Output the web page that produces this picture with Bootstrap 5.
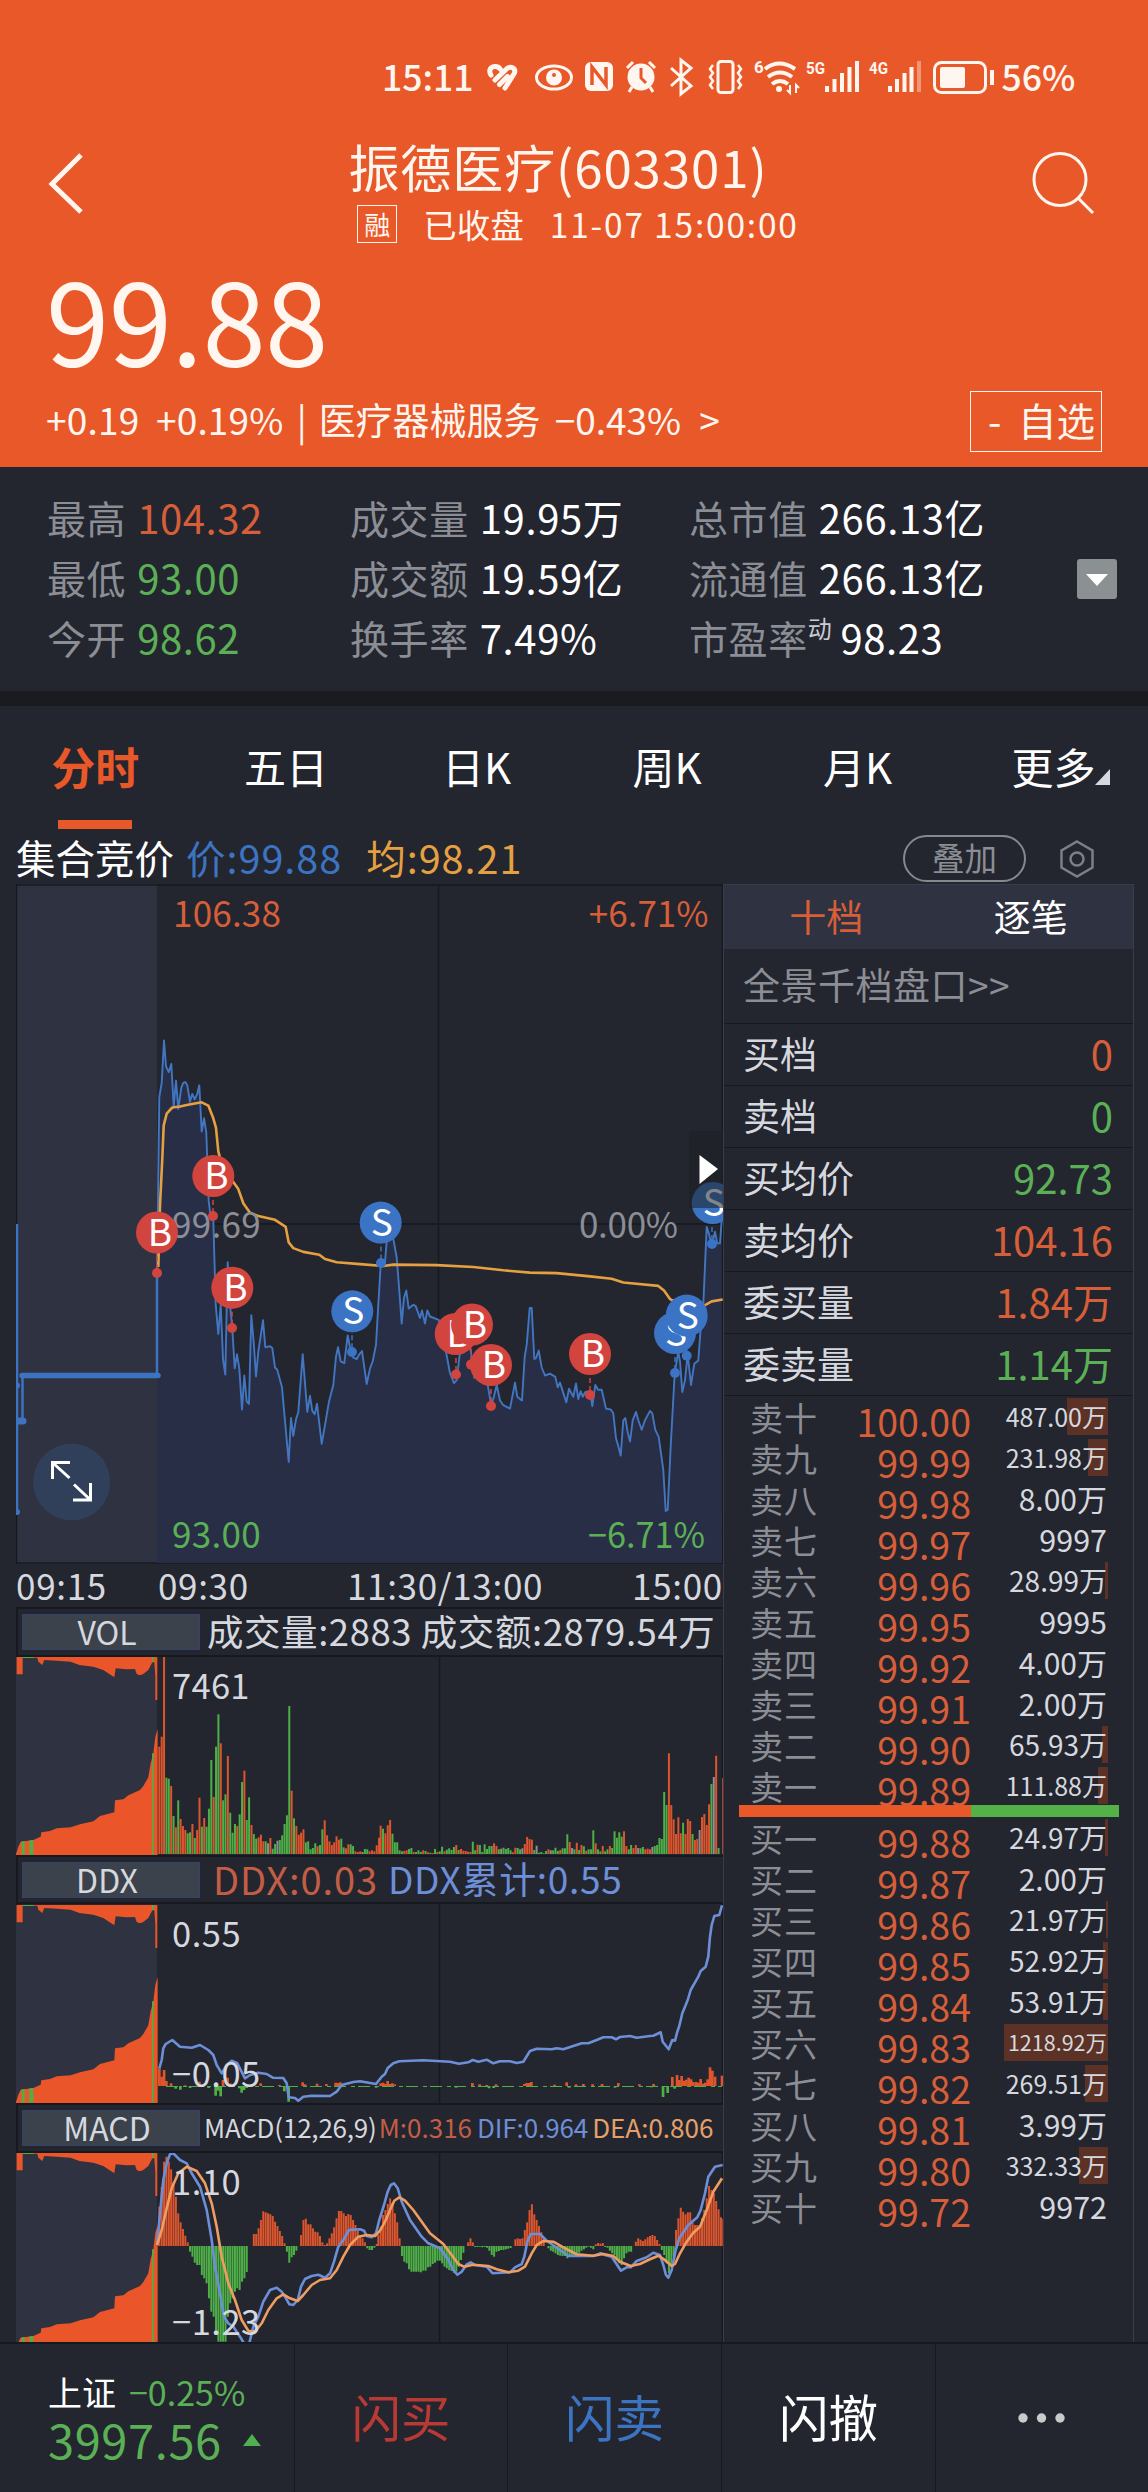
<!DOCTYPE html>
<html lang="zh-CN">
<head>
<meta charset="utf-8">
<meta name="viewport" content="width=device-width, initial-scale=1">
<title>振德医疗(603301)</title>
<link href="https://cdn.jsdelivr.net/npm/bootstrap@5.3.0/dist/css/bootstrap.min.css" rel="stylesheet">
<style>
:root{--up:#e95829;--ink:#23252f;--up2:#d65e38;--down:#5bb056;--blue:#3d74c2;--line:#171921;--pale:#d5d8de;--dim:#8b8e94}
html,body{overflow-x:hidden}
body{background:var(--ink);color:#fff;font-family:"Noto Sans CJK SC","Noto Sans",sans-serif;line-height:1;width:1148px;font-size:39px}
svg{display:block;flex:none}
.up{color:var(--up2)}.down{color:var(--down)}.blue{color:var(--blue)}.dim{color:var(--dim)}
.hero{background:var(--up);height:467px;color:#fff6f0}
.status{box-sizing:content-box;height:62px;padding:45px 0 0 382px;font-size:35.5px;font-weight:500}
.titlebar{height:114px;padding:0 52px 0 48px;margin-top:26px}
.ttl{font-size:51px;height:59px;letter-spacing:.9px}
.sub{font-size:33.5px;height:40px;gap:26px;margin-left:40px;padding-bottom:1px}
.date{letter-spacing:1.8px}
.rong{font-size:26px;border:1.5px solid #fff6f0;width:40px;height:38px}
.price{font-size:114px;height:142px;padding-left:46px;letter-spacing:-.6px}
.chg{height:61px;padding:0 46px;font-size:37px;white-space:nowrap}
.fav{width:132px;height:61px;border:1.5px solid #fff6f0;font-size:38.5px;padding:0 6px 3px 0;word-spacing:8px;margin-top:3px}
.stats{height:224px;padding:20px 31px 0 47px;font-size:40px;letter-spacing:.6px}
.stats .g>div{height:60px;white-space:nowrap}
.stats .dim{font-size:39px;margin-right:11px}
.g1{width:303px}.g2{width:339px}
.dyn{font-size:24px;color:#c9ccd2;margin:9px 8px 0 0}
.strip{height:15px;background:#1a1b1f}
.tabs{height:129px;font-size:42px}
.tabs .nav-link{flex:0 0 190.6px;height:123px;padding:0 0 3px;color:#fff;position:relative}
.tabs .nav-link:last-child{flex:1 0 0;padding-left:21px}
.tabs .active{color:var(--up);font-weight:700;font-size:44px}
.tabs .active::after{content:"";position:absolute;left:58px;bottom:0;width:74px;height:9px;background:var(--up)}
.info{height:49px;padding:0 54px 2px 16px;font-size:39.5px}
.info>span:not(.pill){padding-bottom:4px}
.vals{letter-spacing:1px}
.pill{width:123px;height:47px;border:2px solid #85898f;border-radius:24px;font-size:32.5px;margin-right:34px;padding-bottom:3px}
.left{width:707px;margin-left:16px}
.times{height:43px;font-size:35px;color:var(--pale);letter-spacing:.7px;padding-bottom:3px}
.ind{height:50px;border:2px solid var(--line);border-width:2px 0 2px 2px;color:var(--pale);white-space:nowrap}
.ind>span{padding-bottom:2px}
.btn-ind{width:178px;height:36px;background:#3c424c;border:1.5px solid #35436a;border-radius:0;color:var(--pale);font-size:32px;line-height:1;padding:0 8px 3px 0;margin-left:4px;flex:none}
.right{width:411px;border:1px solid #3a3d48;border-width:1px 1px 0 1px;height:1458px}
.seg{height:64px;background:#2f3240;font-size:37px;padding-bottom:2px}
.qlink{height:75px;padding:0 0 3px 19px;font-size:37px;border-bottom:1.5px solid var(--line);letter-spacing:.5px}
.kv{height:62px;padding:0 20px 3px 19px;border-bottom:1.5px solid var(--line);font-size:40px}
.kv span:first-child{font-size:37px;color:var(--pale)}
.ord{height:41px;padding:0 25px 4px 26px}
.lab{font-size:33px;width:68px;color:var(--dim);letter-spacing:1px;padding-top:3px}
.prc{font-size:37.5px;width:153px;text-align:right;color:var(--up2);padding-top:4px}
.qty{height:37px;position:relative;color:var(--pale)}
.qty i{position:absolute;right:0;top:0;bottom:0;background:#5c3226}
.qty b{font-weight:400;position:relative;margin-right:1px;padding-bottom:1px}
.buysell{height:12px;margin:0 14px 0 15px;position:relative;background:#54b147}
.buysell div{height:12px;background:#e95829}
.foot{height:150px;border-top:2px solid var(--line);font-size:49.5px}
.foot>div{border-right:1.5px solid var(--line)}
.act{padding-bottom:5px}
</style>
<script src="https://cdn.jsdelivr.net/npm/bootstrap@5.3.0/dist/js/bootstrap.bundle.min.js"></script>
</head>
<body>
<header class="hero d-flex flex-column">
  <div class="status d-flex align-items-center">
    <span>15:11</span>
    <svg width="522" height="45" viewBox="478 55 522 45" style="margin-left:6px" fill="none" stroke="#fff6f0" stroke-width="3">
      <path d="M489 76c-3-5 0-8.500 4-8.500 3 0 4.500 1 5.500 3M493 81l12-11.500c4-3 9 0 7.500 4.500L503 89M497.500 85.500l8-8" stroke-width="5" stroke-linecap="round" stroke-linejoin="round"/>
      <ellipse cx="552" cy="78.500" rx="17.500" ry="11.500"/><circle cx="552" cy="78.500" r="6.500" fill="#fff6f0"/><circle cx="552" cy="76" r="2" fill="#e95829" stroke="none"/>
      <rect x="583" y="63" width="28" height="29" rx="6" fill="#fff6f0" stroke="none"/><path d="M590 86V68l14 18V68" stroke="#e95829" stroke-width="3.500"/>
      <circle cx="639" cy="78" r="13.500" fill="#fff6f0" stroke="none"/><path d="M639 69v10l5 5" stroke="#e95829"/><path d="M625 69l6-6M653 69l-6-6M630 88l-3 5M648 88l3 5"/>
      <path d="M669 69l20 18-10 8V61l10 8-20 18"/>
      <rect x="716" y="62.500" width="15" height="31" rx="3"/><path d="M711 66l-3 4 3 4-3 4 3 4-3 4 3 4M736 66l3 4-3 4 3 4-3 4 3 4-3 4" stroke-width="2.500"/>
      <g fill="#fff6f0" stroke="none" font-family="Roboto,sans-serif" font-size="17" font-weight="700"><text x="752" y="74">6</text><text x="804" y="75" textLength="19" lengthAdjust="spacingAndGlyphs">5G</text><text x="867" y="75" textLength="19" lengthAdjust="spacingAndGlyphs">4G</text></g>
      <path d="M763 70q14-11 30 0M766 78q12-9 24 0M770 85q8-6 16 0" stroke-width="4"/><circle cx="777" cy="90" r="3" fill="#fff6f0" stroke="none"/><path d="M788 86v8l-3-3M794 94v-8l3 3" stroke-width="2"/>
      <path d="M825 93v-6M832.500 93V80M840 93V74M847.500 93V68M855 93V62M888 93v-6M895 93V80M902.500 93V74M909.500 93V68" stroke-width="4"/><path d="M917 93V62" stroke-width="4" opacity=".4"/>
      <rect x="932.500" y="63.500" width="51" height="30" rx="7"/><rect x="938" y="68" width="25" height="21" rx="2" fill="#fff6f0" stroke="none"/><path d="M990 71v15" stroke-width="4"/>
    </svg>
    <span>56%</span>
  </div>
  <div class="titlebar d-flex justify-content-between">
    <svg width="36" height="114" viewBox="48 133 36 114" fill="none" stroke="#fff6f0" stroke-width="5"><path d="M81 155L52 184l29 28"/></svg>
    <div class="d-flex flex-column align-items-center">
      <div class="ttl d-flex align-items-center mt-1">振德医疗(603301)</div>
      <div class="sub d-flex align-items-center mt-2"><span class="rong d-flex align-items-center justify-content-center">融</span><span>已收盘</span><span class="date">11-07 15:00:00</span></div>
    </div>
    <svg width="64" height="114" viewBox="1032 133 64 114" fill="none" stroke="#fff6f0" stroke-width="3"><circle cx="1060" cy="179.500" r="26"/><path d="M1078 198l15 15"/></svg>
  </div>
  <div class="price d-flex align-items-center">99.88</div>
  <div class="chg d-flex align-items-center">
    <span style="word-spacing:8px;letter-spacing:.2px">+0.19 +0.19%</span><span style="margin:0 12px 0 13px">|</span><span>医疗器械服务</span><span style="margin-left:14px">−0.43%</span><span style="margin-left:18px">&gt;</span>
    <span class="fav ms-auto d-flex align-items-center justify-content-end">- 自选</span>
  </div>
</header>
<section class="stats d-flex">
  <div class="g g1">
    <div class="d-flex align-items-center"><span class="dim">最高</span><span class="up">104.32</span></div>
    <div class="d-flex align-items-center"><span class="dim">最低</span><span class="down">93.00</span></div>
    <div class="d-flex align-items-center"><span class="dim">今开</span><span class="down">98.62</span></div>
  </div>
  <div class="g g2">
    <div class="d-flex align-items-center"><span class="dim">成交量</span><span>19.95万</span></div>
    <div class="d-flex align-items-center"><span class="dim">成交额</span><span>19.59亿</span></div>
    <div class="d-flex align-items-center"><span class="dim">换手率</span><span>7.49%</span></div>
  </div>
  <div class="g">
    <div class="d-flex align-items-center"><span class="dim">总市值</span><span>266.13亿</span></div>
    <div class="d-flex align-items-center"><span class="dim">流通值</span><span>266.13亿</span></div>
    <div class="d-flex align-items-center"><span class="dim me-0">市盈率</span><span class="dyn align-self-start">动</span><span>98.23</span></div>
  </div>
  <svg class="ms-auto" style="margin-top:72px" width="40" height="40" viewBox="0 0 40 40"><rect width="40" height="40" rx="3" fill="#8b9093"/><path d="M9 15h22L20 27z" fill="#fff"/></svg>
</section>
<div class="strip"></div>
<nav class="tabs nav flex-nowrap">
  <a class="nav-link active d-flex align-items-center justify-content-center">分时</a>
  <a class="nav-link d-flex align-items-center justify-content-center">五日</a>
  <a class="nav-link d-flex align-items-center justify-content-center">日K</a>
  <a class="nav-link d-flex align-items-center justify-content-center">周K</a>
  <a class="nav-link d-flex align-items-center justify-content-center">月K</a>
  <a class="nav-link d-flex align-items-center justify-content-center">更多<svg width="15" height="38" viewBox="0 0 15 38"><path d="M15 22v16H0z" fill="#d5d8de"/></svg></a>
</nav>
<div class="info d-flex align-items-center">
  <span>集合竞价</span><span class="blue vals" style="margin-left:12px">价:99.88</span><span class="vals" style="margin-left:24px;color:#e5a141">均:98.21</span>
  <span class="pill ms-auto d-flex align-items-center justify-content-center dim">叠加</span>
  <svg width="34" height="38" viewBox="0 0 34 38" fill="none" stroke="#7b7f86" stroke-width="2.500"><path d="M17 1.500l15.500 9v17L17 36.500 1.500 27.500v-17z"/><circle cx="17" cy="19" r="6.500"/></svg>
</div>
<main class="d-flex">
  <div class="left">
    <svg id="main" width="707" height="680" viewBox="16 884 707 680">
      <rect x="16" y="884" width="141" height="680" fill="#2f3240"/>
      <path d="M16 885H723M16.500 884V1564M16 1563H723M438.500 885V1563M157 1224H723M722.500 884V1564" stroke="#171921" stroke-width="1.500" fill="none"/>
      <g id="price"></g>
      <g fill="none" stroke="#3d74c2"><path d="M17 1224V1512M22.500 1421V1376M157 1375V1273" stroke-width="2.500"/><path d="M22 1375.500H158" stroke-width="5.500" stroke-linecap="round"/><path d="M18 1421h5" stroke-width="7" stroke-linecap="round"/></g>
      <circle cx="17" cy="1385.500" r="3" fill="#3d74c2"/><circle cx="17" cy="1512" r="3" fill="#3d74c2"/>
      <g font-size="35">
        <text x="173" y="927" fill="#d65e38" letter-spacing=".2">106.38</text><text x="708.500" y="927" text-anchor="end" fill="#d65e38">+6.71%</text>
        <text x="172" y="1238" fill="#8b8e94" letter-spacing=".3">99.69</text><text x="579" y="1238" textLength="99" fill="#8b8e94">0.00%</text>
        <text x="172" y="1548" fill="#5bb056" letter-spacing=".3">93.00</text><text x="588" y="1548" textLength="117" lengthAdjust="spacingAndGlyphs" fill="#5bb056">−6.71%</text>
      </g>
      <g id="marks"></g>
      <rect x="689" y="1131" width="34" height="77" fill="#1f2126" opacity=".55"/><path d="M699.500 1155L718 1169l-18.500 15z" fill="#fff"/>
      <circle cx="71.700" cy="1482" r="38.500" fill="#30405a"/>
      <path d="M70 1462.500H52.500V1479M53 1463l16.500 15M73 1500H90.500V1483M90 1499.500L74 1484.500" stroke="#fff" stroke-width="3" fill="none"/>
    </svg>
    <div class="times d-flex align-items-center"><span>09:15</span><span style="margin-left:51px">09:30</span><span style="margin-left:98px">11:30/13:00</span><span class="ms-auto">15:00</span></div>
    <div class="ind d-flex align-items-center"><button class="btn btn-ind">VOL</button><span style="font-size:36.500px;margin-left:7px;letter-spacing:.55px">成交量:2883 成交额:2879.54万</span></div>
    <svg id="vol" width="707" height="198" viewBox="16 1657 707 198"></svg>
    <div class="ind d-flex align-items-center" style="height:49px"><button class="btn btn-ind">DDX</button><span style="font-size:38px;margin-left:13px;letter-spacing:.9px;color:#c25e46">DDX:0.03</span><span style="font-size:37px;margin-left:10px;letter-spacing:.7px;color:#6d8fd8">DDX累计:0.55</span></div>
    <svg id="ddx" width="707" height="199" viewBox="16 1904 707 199"></svg>
    <div class="ind d-flex align-items-center" style="font-size:26px"><button class="btn btn-ind">MACD</button><span style="margin-left:4px;letter-spacing:-.2px">MACD(12,26,9)</span><span style="margin-left:2px;color:#c25e46">M:0.316</span><span style="margin-left:5px;letter-spacing:-.1px;color:#6d8fd8">DIF:0.964</span><span style="margin-left:4px;color:#e5a06a">DEA:0.806</span></div>
    <svg id="macd" width="707" height="189" viewBox="16 2153 707 189"></svg>
  </div>
  <aside class="right">
    <div class="seg d-flex align-items-center text-center"><span class="w-50 up">十档</span><span class="w-50">逐笔</span></div>
    <div class="qlink d-flex align-items-center dim">全景千档盘口&gt;&gt;</div>
    <div class="kv d-flex align-items-center justify-content-between"><span>买档</span><span class="up">0</span></div>
    <div class="kv d-flex align-items-center justify-content-between"><span>卖档</span><span class="down">0</span></div>
    <div class="kv d-flex align-items-center justify-content-between"><span>买均价</span><span class="down">92.73</span></div>
    <div class="kv d-flex align-items-center justify-content-between"><span>卖均价</span><span class="up">104.16</span></div>
    <div class="kv d-flex align-items-center justify-content-between"><span>委买量</span><span class="up">1.84万</span></div>
    <div class="kv d-flex align-items-center justify-content-between"><span>委卖量</span><span class="down">1.14万</span></div>
    <div id="asks" style="height:409px;padding-top:2px"></div>
    <div class="buysell"><div style="width:61.1%"></div></div>
    <div id="bids" style="padding-top:2px"></div>
  </aside>
</main>
<footer class="foot d-flex">
  <div style="width:295px;padding:29px 0 0 48px;white-space:nowrap">
    <div class="d-flex align-items-center" style="height:38px;font-size:34px"><span>上证</span><span class="down" style="margin-left:13px">−0.25%</span></div>
    <div class="d-flex align-items-center down" style="height:54px;font-size:47px;letter-spacing:.6px">3997.56<svg width="18" height="12" viewBox="0 0 18 12" style="margin:3px 0 0 21px"><path d="M9 0l9 12H0z" fill="#4fb04f"/></svg></div>
  </div>
  <div class="act d-flex align-items-center justify-content-center" style="width:213px;color:#b83a34">闪买</div>
  <div class="act d-flex align-items-center justify-content-center blue" style="width:214px">闪卖</div>
  <div class="act d-flex align-items-center justify-content-center" style="width:214px">闪撤</div>
  <div class="d-flex align-items-center justify-content-center flex-fill border-0"><svg width="48" height="10" viewBox="0 0 48 10" fill="#c9cacc"><circle cx="5" cy="5" r="4.700"/><circle cx="23.500" cy="5" r="4.700"/><circle cx="42" cy="5" r="4.700"/></svg></div>
</footer>
<script>
const $=id=>document.getElementById(id), add=(id,s)=>$(id).insertAdjacentHTML('beforeend',s);
// order book: level, price, quantity, text size, depth bar width
const book=(id,side,rows)=>add(id,rows.map(([l,p,q,s,w])=>`<div class="ord d-flex"><span class="lab">${side+l}</span><span class="prc">${p}</span><span class="qty flex-fill d-flex align-items-center justify-content-end" style="font-size:${s}px"><i style="width:${w}px"></i><b>${q}</b></span></div>`).join(''));
book('asks','卖',[['十','100.00','487.00万',25,41],['九','99.99','231.98万',25,20],['八','99.98','8.00万',30,0],['七','99.97','9997',30.5,0],['六','99.96','28.99万',28,3],['五','99.95','9995',30.5,0],['四','99.92','4.00万',30,0],['三','99.91','2.00万',30,0],['二','99.90','65.93万',28,6],['一','99.89','111.88万',25,10]]);
book('bids','买',[['一','99.88','24.97万',28,3],['二','99.87','2.00万',30,0],['三','99.86','21.97万',28,2],['四','99.85','52.92万',28,5],['五','99.84','53.91万',28,5],['六','99.83','1218.92万',21.5,104],['七','99.82','269.51万',25,23],['八','99.81','3.99万',30,0],['九','99.80','332.33万',25,29],['十','99.72','9972',30.5,0]]);

// series are sampled in thirds of a pixel horizontally; the afternoon half starts 1080 units in
const pts=(a,b,oy,ky)=>{const f=(s,dx)=>s.trim().split(/\s+/).map(p=>{const[x,y]=p.split(',').map(Number);return ((x+dx)/3).toFixed(1)+','+(oy+y/ky).toFixed(1)});return f(a,0).concat(f(b,1080)).join(' ')};
const line=(p,c,w)=>`<polyline points="${p}" fill="none" stroke="${c}" stroke-width="${w}" stroke-linejoin="round"/>`;
const pr=pts(`471,845 478,460 485,430 492,340 498,395 506,407 514,390 521,480 528,425 535,485 544,440 550,430 556,428 562,435 570,470 577,453 584,465 591,455 598,435 605,533 612,505 619,535 626,680 633,720 640,720 647,900 655,962 662,900 669,1015 676,1048 683,810 690,900 697,950 704,1035 711,1005 718,1035 726,1122 733,1050 740,1105 747,1110 754,922 761,980 768,1052 775,1000 789,933 796,990 810,988 817,992 825,1033 832,1038 846,1075 853,1130 866,1233 873,1140 880,1178 888,1143 895,1128 908,1005 922,1127 930,1093 937,1125 944,1132 951,1110 965,1195 975,1155 987,1105 1000,1070 1008,1010 1014,990 1022,1020 1033,1024 1043,965 1050,990 1060,1012 1070,1015 1078,1005 1086,998 1100,1068 1110,1035 1118,1020 1128,985`,
`55,900 62,815 75,810 80,765 90,700 100,760 110,800 118,870 125,940 132,885 139,870 146,908 160,900 167,903 180,928 186,912 195,940 202,912 210,925 236,932 258,1000 270,1045 282,1066 290,1060 300,1000 315,960 333,1000 343,1055 355,1040 370,1020 383,1070 393,1110 400,1100 410,1070 420,1103 430,1113 450,1120 465,1065 472,1095 486,1103 494,1010 500,985 509,907 515,907 523,1015 528,1013 536,997 545,1033 555,1050 570,1046 586,1053 593,1075 600,1065 619,1107 627,1078 640,1095 648,1067 655,1100 662,1083 668,1095 676,1085 690,1083 697,1115 706,1070 714,1080 725,1080 738,1120 752,1122 760,1130 768,1183 775,1200 782,1220 790,1145 796,1140 803,1170 810,1190 818,1145 828,1127 835,1145 845,1165 855,1145 870,1125 877,1130 886,1165 896,1180 910,1250 917,1337 923,1335 932,1200 944,1045 955,1000 960,1020 967,1085 975,1060 983,1005 993,1070 1003,1025 1015,1018 1022,950 1030,900 1040,735 1047,750 1055,775 1065,745 1072,770 1080,770 1085,720`,880,2.119);
const avg=pts(`475,820 480,690 487,590 491,520 500,495 517,482 540,480 560,477 605,471 625,478 640,505 648,525 655,575 668,610 700,640 715,655 730,685 750,705 775,712 825,720 857,735 866,768 880,780 910,788 958,794 975,803 1010,810`,`0,814 70,818 100,815 230,816 340,820 430,827 510,832 590,833 690,840 755,845 790,853 895,860 912,870 930,888 980,905 1030,903 1055,893 1088,889`,880,2.119);
add('price',`<polygon points="157,1563 ${pr} 722,1563" fill="#29304a" fill-opacity=".85"/>`+line(pr,'#4276c0',1.9)+line(avg,'#e5a141',2.6));
add('marks',[['B',157,1232.5,157,1273],['B',213.3,1176,213,1216],['B',232.3,1287.7,232,1328],['S',352.3,1311.3,352,1352],['S',380.7,1222.6,381,1263],['B',455.7,1334,456,1374.5],['B',472,1324.5,471,1364.6],['B',491,1365,491,1406],['B',590,1354,590,1395],['S',675,1333,675,1373],['S',686.7,1315.6,686.7,1355.7],['S',712.7,1203,712,1244]].map(([t,x,y,dx,dy])=>{const c=t=='B'?'#d2453f':'#3b74c4';return `<path d="M${dx} ${y}V${dy}" stroke="${c}" stroke-width="1.5" stroke-dasharray="5 3"/><circle cx="${dx}" cy="${dy}" r="5" fill="${c}"/><circle cx="${x}" cy="${y}" r="21" fill="${c}"/><text x="${x+(t=='B'?3:1)}" y="${y+13}" font-size="37" text-anchor="middle" fill="#fff">${t}</text>`}).join(''));

// call-auction silhouette shared by the three indicator panels
const R='#ea562a',G='#4faf47',X='#8b8f96',C={r:'#dd552d',g:G,x:X};
const auction=dy=>`<rect x="16" y="1657" width="141" height="198" fill="#2f3240" transform="translate(0 ${dy})"/><g transform="translate(0 ${1600+dy}) scale(.33333)"><path fill="${R}" d="M48 762L55 740 62 725 100 720 122 710 124 697 150 693 170 685 212 682 240 673 280 664 300 648 343 637 345 601 370 598 385 586 420 570 430 558 445 532 452 490 460 460 466 410 473 387V765H48zM50 171V223H68V173H112L115 185 127 195 133 180 170 182 212 185 238 195 280 200 310 210 320 217 343 232 347 205 380 208 405 207 410 222 420 226 430 222 445 210 457 187 463 187 466 230V300H472V171z"/><path fill="${G}" d="M65 724h9v40h-9zM88 721h12v43h-12zM456 460h5v304h-5zM456 171h5v16h-5zM68 171h32v3h-32z"/></g>`;
const grid=(y,h)=>`<path d="M439.500 ${y}v${h}M16.500 ${y}v${h}M722.500 ${y}v${h}" stroke="#171921" stroke-width="1.500"/>`;
const bars=(s,x0,base,oy)=>s.trim().split(/\s+/).map((t,i)=>{const m=t.match(/^(\d+)([rgx])$/);if(!m)return'';const y=oy+Math.min(+m[1],base)/3,h=Math.abs(base-m[1])/3;return `<rect x="${((x0+i*7.088-3)/3).toFixed(2)}" y="${y.toFixed(1)}" width="2" height="${h.toFixed(1)}" fill="${C[m[2]]}"/>`}).join('');
add('vol',grid(1657,198)+auction(0)+bars(`440r 410r 171r 533g 536g 558r 648g 682r 601g 657r 678r 690r 700g 697g 672r 714g 690r 593r 680g 654r 680g 626g 480g 591r 440g 343g 430r 601g 583g 468r 638g 698g 672g 678r 643g 546g 512r 660g 592g 675r 702g 716g 712r 704r 724r 724g 730x 714r 746g 732g 722x 720g 706g 672g 646g 318g 572r 655g 678r 704r 698r 688r 727g 724g 748g 744g 730g 739r 735g 688g 661r 706r 724r 735r 727r 709r 719r 716g 742g 745r 733r 733g 738g 754r 756r 754r 756x 747g 748g 754r 751r 754r 736r 713r`,478,762,1600)+bars(`677r 686g 700r 676r 660r 701g 727g 727g 751g 754g 753r 751r 747g 744g 756r 756g 751g 756g 751r 753g 757r 758g 759r 747g 756r 754g 740g 754r 749g 745g 750g 741g 735r 750g 747r 752r 753r 755r 756r 725g 751g 734r 735g 756g 733g 747g 738g 738g 730r 738r 748g 746x 743g 747g 744g 751g 757r 743r 744g 748g 745x 732r 711r 717r 719r 750g 737x 758g 756g 760g 753g 748r 751x 751g 743g 753g 750r 745g 745g 703g 726r 744x 748g 728r 750g 735r 739g 752r 748g 748g 691g 730r 748g 754g 738r 754g 748g 738r 744g 694g 713g 697g 710g 694r 738r 748g 735g 744r 735r 744x 745g 741g 748r 746r 748r 741x 738g 735g 714g 717g 576g 615g 460r 615r 658r 702r 652r 700r 668g 702r 657r 663r 702g 720r 717r 690x 651r 642r 675r 613r 552g 531x 467r 744g - 534r`,1142,762,1600)+`<text x="172" y="1699" font-size="34.500" letter-spacing=".3" fill="#d5d8de">7461</text>`);

const spot=(s,dx,base,oy)=>s.trim().split(/\s+/).map(t=>{const[x,v]=t.split(',').map(Number);const y=oy+Math.min(v,base)/3;return `<rect x="${((x+dx-4)/3).toFixed(1)}" y="${y.toFixed(1)}" width="2.700" height="${(Math.abs(base-v)/3).toFixed(1)}" fill="${v<base?C.r:C.g}"/>`}).join('');
const ddx=pts(`478,265 485,240 490,205 497,192 517,180 540,200 575,203 600,195 625,210 640,225 650,255 665,280 680,255 695,242 712,250 735,295 750,285 775,278 800,282 818,293 850,294 860,310 866,352 885,354 895,362 910,350 935,347 990,348 1010,335 1025,315 1060,306`,`0,304 48,312 65,290 75,282 83,264 100,250 118,244 190,241 270,245 297,251 325,247 338,240 355,245 380,239 400,250 420,244 450,244 470,249 490,245 510,213 530,206 575,208 590,205 610,208 640,198 665,190 685,190 710,180 730,172 755,172 768,178 780,171 810,168 830,173 870,168 880,167 902,157 908,185 926,208 937,180 945,182 952,155 958,138 967,100 975,80 983,60 992,30 1015,-10 1022,-27 1037,-40 1045,-70 1050,-130 1055,-165 1063,-192 1078,-195 1086,-224`,1980,3);
add('ddx',grid(1904,199)+auction(248)+`<path d="M166 2086.500H722" stroke="${G}" stroke-width="1" stroke-dasharray="12 5 4 3"/>`+
spot('478,265 485,290 492,270 499,303 513,310 555,316 598,305 669,300 683,293 690,310 782,310 838,315 908,307 915,313 951,311 979,312 1007,308 1014,309 1021,307 527,326 541,329 570,324 626,324 647,347 655,332 662,349 718,325 725,338 732,330 740,324 853,334 866,365',0,318,1980)+
spot('62,310 69,308 76,312 83,303 90,312 97,310 104,313 337,309 359,313 380,315 408,313 493,312 500,309 507,309 514,306 584,314 620,307 648,313 670,312 698,313 726,312 775,309 838,313 881,312 937,291 951,285 958,300 965,288 972,302 979,299 986,293 993,298 1000,306 1008,306 1015,308 1022,297 1029,311 1036,308 1043,298 1050,262 1057,272 1065,290 1086,287 48,323 288,323 387,325 401,324 627,323 765,323 874,322 909,351 923,339 944,326',1080,318,1980)+
line(ddx,'#6d8fd8',2.6)+`<g font-size="34.500" letter-spacing=".5" fill="#d5d8de"><text x="172" y="1947">0.55</text><text x="172" y="2087">−0.05</text></g>`);

const run=(s,x0)=>bars(s.trim().split(/\s+/).map(v=>v=='-'?'-':v+(+v<798?'r':'g')).join(' '),x0,798,1980);
const dif=pts(`471,795 480,700 490,600 500,550 510,523 520,520 540,540 560,550 575,580 600,620 620,690 635,780 645,860 660,940 672,1010 685,1030 700,1040 720,1070 735,1095 748,1090 760,1040 775,1010 790,965 810,930 830,923 845,935 855,950 868,973 880,975 893,960 903,920 915,897 935,888 955,884 975,893 990,880 1002,845 1015,800 1030,780 1047,750`,`0,748 12,752 20,768 35,772 48,760 58,720 72,675 83,635 92,615 102,610 113,625 125,665 150,720 185,770 205,790 240,805 265,840 280,870 292,884 305,875 320,853 332,847 345,855 380,860 398,880 450,877 465,862 485,852 493,830 502,785 512,762 540,762 560,782 600,810 625,828 700,828 722,820 735,825 755,830 770,853 783,872 800,862 812,862 830,843 860,832 880,818 900,825 910,855 918,885 925,893 935,870 947,810 958,775 985,735 1012,712 1022,690 1035,640 1045,590 1065,560 1088,555`,1980,3);
const dea=pts(`471,795 485,750 500,685 515,625 535,580 560,560 590,573 615,610 635,670 650,740 665,830 685,910 705,960 725,1020 745,1052 765,1055 785,1030 805,990 830,955 850,943 870,955 893,963 910,945 935,915 960,900 990,895 1010,870 1030,830 1050,795`,`-5,770 20,765 45,768 60,752 75,725 90,690 103,662 118,652 135,662 160,690 210,760 250,792 275,825 295,852 312,860 340,854 385,858 410,868 445,877 475,872 495,860 515,820 530,795 550,783 580,785 610,802 650,823 700,827 730,822 760,828 780,845 812,858 840,852 870,838 895,827 912,838 935,858 945,852 960,820 980,785 1000,758 1020,740 1040,690 1060,635 1086,595`,1980,3);
add('macd',grid(2153,189)+auction(496)+run(`680 620 545 530 545 568 605 650 700 727 747 767 787 815 830 848 855 855 885 895 910 955 995 1010 1050 1085 1085 1085 1085 1010 970 955 935 925 930 905 895 876 - - 762 762 745 720 694 697 700 703 708 725 738 753 768 790 815 848 832 825 812 - 765 720 716 733 733 745 755 757 768 787 795 790 775 760 742 715 693 693 700 708 702 705 720 735 752 765 775 787 805 810 810 803 792`,478)+
run(`765 740 705 690 672 655 668 700 727 775 828 845 850 868 875 875 875 875 877 872 872 862 860 852 848 842 842 850 860 865 870 873 878 875 860 840 818 - 787 775 787 801 801 800 802 801 803 812 825 830 815 813 810 810 808 806 804 - 778 775 777 775 750 727 690 673 703 720 738 757 775 - 805 812 815 820 825 827 828 828 835 830 828 825 820 818 812 808 803 800 803 808 793 789 791 789 801 803 812 820 825 838 850 855 835 820 815 815 - 785 775 779 783 778 772 768 765 768 780 792 810 825 850 880 860 830 750 715 683 695 703 697 697 728 735 735 735 715 690 655 618 630 640 663 688 712 717`,1135)+
line(dif,'#6d8fd8',2.6)+line(dea,'#ef9d60',2.6)+`<g font-size="34.500" letter-spacing=".5" fill="#d5d8de"><text x="172" y="2195">1.10</text><text x="172" y="2335">−1.23</text></g>`);
</script>
</body>
</html>
